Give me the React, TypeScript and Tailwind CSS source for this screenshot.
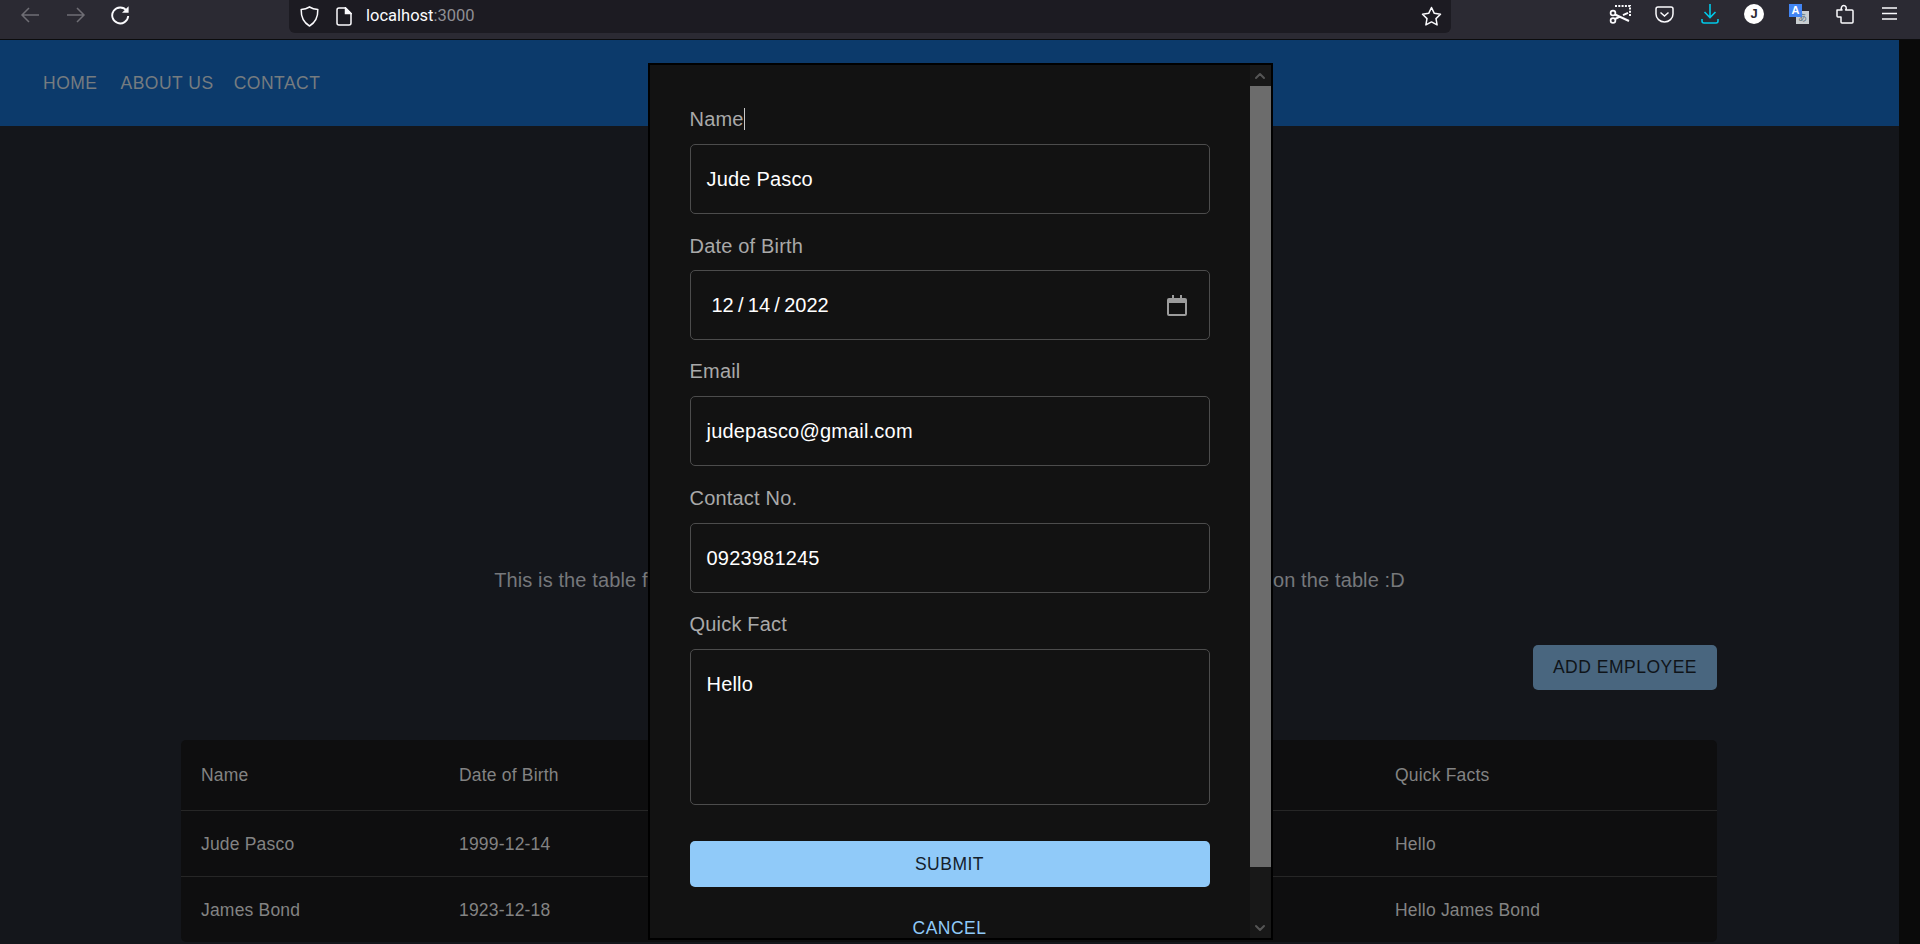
import { ChevronDown, ChevronUp } from "lucide-react";

const employees = [
  { name: "Jude Pasco", dob: "1999-12-14", email: "judepasco@gmail.com", contact: "0923981245", fact: "Hello" },
  { name: "James Bond", dob: "1923-12-18", email: "jamesbond@gmail.com", contact: "0912345678", fact: "Hello James Bond" },
];

function Toolbar() {
  return (
    <div className="flex h-[40px] shrink-0 border-b border-[#0c0c0d] bg-[#2b2a33]">
      <div className="flex h-[39px] w-[289px] shrink-0 items-start pl-[20px] pt-[5px]">
        <svg width="20" height="20" viewBox="0 0 20 20" fill="none" stroke="#6f6e75" strokeWidth="1.5">
          <path d="M19 10H2M9 3l-7 7 7 7" />
        </svg>
        <svg className="ml-[26px]" width="20" height="20" viewBox="0 0 20 20" fill="none" stroke="#6f6e75" strokeWidth="1.5">
          <path d="M1 10h17M11 3l7 7-7 7" />
        </svg>
        <svg className="ml-[24px]" width="20" height="20" viewBox="0 0 20 20" fill="none" stroke="#fbfbfe" strokeWidth="1.9">
          <path d="M16.5 5.5A8 8 0 1 0 18.2 11" />
          <path d="M18.6 1.2v6.6h-6.6z" fill="#fbfbfe" stroke="none" />
        </svg>
      </div>
      <div className="flex h-[33px] w-[1162px] shrink-0 items-center rounded-b-[6px] bg-[#1c1b22] pl-[11px]">
        <svg width="19" height="21" viewBox="0 0 19 21" fill="none" stroke="#fbfbfe" strokeWidth="1.5">
          <path d="M9.5 1C7 2.6 4 3.4 1.2 3.6c-.2 6.6 1.6 12.6 8.3 16.4 6.7-3.8 8.5-9.8 8.3-16.4C15 3.4 12 2.6 9.5 1z" />
        </svg>
        <svg className="ml-[17px]" width="16" height="19" viewBox="0 0 16 19" fill="none" stroke="#fbfbfe" strokeWidth="1.5">
          <path d="M3 1h6.5L15 6.5V16a2 2 0 0 1-2 2H3a2 2 0 0 1-2-2V3a2 2 0 0 1 2-2z" />
          <path d="M9.5 1v5.5H15z" fill="#fbfbfe" />
        </svg>
        <span className="ml-[14px] [font-family:'Roboto',sans-serif] text-[16.5px] text-[#fbfbfe]">
          localhost<span className="text-[#8f8f94]">:3000</span>
        </span>
        <svg className="ml-auto mr-[9px]" width="21" height="21" viewBox="0 0 21 21" fill="none" stroke="#fbfbfe" strokeWidth="1.5" strokeLinejoin="round">
          <path d="M10.5 1.5l2.8 5.8 6.2.9-4.5 4.4 1.1 6.3-5.6-3-5.6 3 1.1-6.3L1.5 8.2l6.2-.9z" />
        </svg>
      </div>
      <div className="flex h-[39px] flex-1 items-start pl-[158px] pt-[4px]">
        <svg width="22" height="20" viewBox="0 0 22 20" fill="none" stroke="#fbfbfe" strokeWidth="2">
          <path d="M6 2h15v11" strokeDasharray="2 1.3" />
          <circle cx="4" cy="9" r="2.4" strokeWidth="1.7" />
          <circle cx="4" cy="16.500" r="2.400" strokeWidth="1.700" />
          <path d="M6 10.500l14 6.500M6 15l5-2.300M14 11.200l5-2.400" />
        </svg>
        <svg className="ml-[24px] mt-[2px]" width="19" height="17" viewBox="0 0 19 17" fill="none" stroke="#fbfbfe" strokeWidth="1.5">
          <path d="M3 1h13a2 2 0 0 1 2 2v5a8.500 8 0 0 1-17 0V3a2 2 0 0 1 2-2z" />
          <path d="M5.500 6.500l4 3.500 4-3.500" />
        </svg>
        <svg className="ml-[27px]" width="18" height="20" viewBox="0 0 18 20" fill="none" stroke="#00c8e8" strokeWidth="1.6">
          <path d="M9 0v13M3.500 8L9 13.500 14.500 8" />
          <path d="M1 15v2a2 2 0 0 0 2 2h12a2 2 0 0 0 2-2v-2" />
        </svg>
        <div className="ml-[25px] flex h-[20px] w-[20px] items-center justify-center rounded-full bg-white [font-family:'Liberation_Sans',sans-serif] text-[13px] font-bold text-[#2b2a33]">
          J
        </div>
        <div className="relative ml-[25px] h-[20px] w-[20px]">
          <div className="absolute bottom-0 right-0 flex h-[13px] w-[13px] items-center justify-center bg-[#c9ced1] [font-family:'Noto_Sans_CJK_JP',sans-serif] text-[9px] leading-none text-[#59707d]">
            あ
          </div>
          <div className="absolute left-0 top-0 flex h-[13px] w-[13px] items-center justify-center bg-[#4285f4] [font-family:'Liberation_Sans',sans-serif] text-[11px] font-bold leading-none text-white">
            A
          </div>
        </div>
        <svg className="ml-[27px]" width="18" height="20" viewBox="0 0 18 20" fill="none" stroke="#fbfbfe" strokeWidth="1.5" strokeLinejoin="round">
          <path d="M1 6h5c-1-1.200-1-2.200-.4-3.200C6.500 1 9 1 10 2.800c.5 1 .4 2-.4 3.200H16a1 1 0 0 1 1 1v11a1 1 0 0 1-1 1H6a1 1 0 0 1-1-1v-5H2a1 1 0 0 1-1-1z" />
        </svg>
        <svg className="ml-[28px] mt-[3px]" width="15" height="13" viewBox="0 0 15 13" stroke="#fbfbfe" strokeWidth="1.500">
          <path d="M0 1h15M0 6.500h15M0 12h15" />
        </svg>
      </div>
    </div>
  );
}

function EmployeeTable() {
  return (
    <table className="ml-[181px] w-[1536px] table-fixed overflow-hidden rounded-[5px] bg-[#0e0e0f] text-left text-[17.5px] tracking-[0.19px] text-[#838383]">
      <colgroup>
        <col className="w-[258px]" />
        <col className="w-[258px]" />
        <col className="w-[339px]" />
        <col className="w-[339px]" />
        <col className="w-[342px]" />
      </colgroup>
      <thead>
        <tr className="h-[70px] border-b border-[#262626]">
          <th className="px-[20px] font-normal">Name</th>
          <th className="px-[20px] font-normal">Date of Birth</th>
          <th className="px-[20px] font-normal">Email</th>
          <th className="px-[20px] font-normal">Contact No.</th>
          <th className="px-[20px] font-normal">Quick Facts</th>
        </tr>
      </thead>
      <tbody>
        {employees.map((e) => (
          <tr key={e.name} className="h-[66px] border-b border-[#262626] last:border-b-0">
            <td className="px-[20px] pt-[2px]">{e.name}</td>
            <td className="px-[20px] pt-[2px]">{e.dob}</td>
            <td className="px-[20px] pt-[2px]">{e.email}</td>
            <td className="px-[20px] pt-[2px]">{e.contact}</td>
            <td className="px-[20px] pt-[2px]">{e.fact}</td>
          </tr>
        ))}
      </tbody>
    </table>
  );
}

function Field({ label, value, caret, className }: { label: string; value: string; caret?: boolean; className: string }) {
  return (
    <div className={className}>
      <div className="mb-[10px] flex h-[30px] items-center text-[20px] tracking-[0.19px] text-[#a9a9a9]">
        {label}
        {caret && <span className="h-[22px] w-px bg-[#c8c8c8]" />}
      </div>
      <div className="flex h-[70px] items-center rounded-[5px] border border-[#4c4c4c] px-[16px] text-[20px] tracking-[0.19px] text-white">
        {value}
      </div>
    </div>
  );
}

function EmployeeDialog() {
  return (
    <div className="fixed inset-x-0 bottom-[4px] top-[63px] flex justify-center">
      <div className="flex h-full w-[625px] overflow-hidden border-2 border-black bg-[#121212] [font-family:'Liberation_Sans',sans-serif]">
        <div className="min-w-0 flex-1 overflow-hidden px-[40px] pt-[39px]">
          <Field className="mb-[16.33px]" label="Name" value="Jude Pasco" caret />
          <div className="mb-[15.5px]">
            <div className="mb-[10px] flex h-[30px] items-center pt-[2px] text-[20px] tracking-[0.19px] text-[#a9a9a9]">Date of Birth</div>
            <div className="flex h-[70px] items-center justify-between rounded-[5px] border border-[#4c4c4c] pl-[21px] pr-[22px] text-[20px] text-white">
              <span className="[word-spacing:-1.3px]">12 / 14 / 2022</span>
              <svg width="20" height="21" viewBox="0 0 20 21" fill="none">
                <path d="M2 3h3V0h2v3h6V0h2v3h3a2 2 0 0 1 2 2v14a2 2 0 0 1-2 2H2a2 2 0 0 1-2-2V5a2 2 0 0 1 2-2zm0 5v11h16V8z" fill="#9c9c9c" />
              </svg>
            </div>
          </div>
          <Field className="mb-[17px]" label="Email" value="judepasco@gmail.com" />
          <Field className="mb-[16.33px]" label="Contact No." value="0923981245" />
          <div className="mb-[36px]">
            <div className="mb-[10px] flex h-[30px] items-center text-[20px] tracking-[0.19px] text-[#a9a9a9]">Quick Fact</div>
            <div className="h-[156px] rounded-[5px] border border-[#4c4c4c] px-[16px] pt-[19px] text-[20px] tracking-[0.19px] text-white">Hello</div>
          </div>
          <button className="h-[46px] w-full rounded-[5px] bg-[#90caf9] text-[17.5px] tracking-[0.5px] text-[#14202b]">SUBMIT</button>
          <button className="mt-[23px] h-[36px] w-full text-[17.5px] tracking-[0.5px] text-[#90caf9]">CANCEL</button>
        </div>
        <div className="flex w-[21px] shrink-0 flex-col bg-[#181818]">
          <div className="flex h-[21px] items-center justify-center">
            <ChevronUp size={16} strokeWidth={3} className="text-[#555555]" />
          </div>
          <div className="h-[781px] bg-[#6c6c6c]" />
          <div className="flex flex-1 items-end justify-center pb-[2px]">
            <ChevronDown size={16} strokeWidth={3} className="text-[#555555]" />
          </div>
        </div>
      </div>
    </div>
  );
}

export default function App() {
  return (
    <div className="flex h-[944px] w-[1920px] flex-col overflow-hidden bg-[#14161b] [font-family:'Liberation_Sans',sans-serif]">
      <Toolbar />
      <div className="flex min-h-0 flex-1">
        <div className="min-w-0 flex-1 overflow-hidden">
          <nav className="flex h-[86px] items-center gap-[23px] bg-[#0c3a6b] pl-[43px] text-[17.5px] tracking-[0.5px] text-[#767c80]">
            <a>HOME</a>
            <a>ABOUT US</a>
            <a className="-ml-[3px]">CONTACT</a>
          </nav>
          <p className="mt-[440px] text-center text-[20px] leading-[28px] tracking-[0.12px] text-[#76787b]">
            This is the table for the employees. You can add, edit, and delete any employee that is on the table :D
          </p>
          <div className="mr-[182px] mt-[51px] flex justify-end">
            <button className="h-[45px] w-[184px] rounded-[5px] bg-[#49667f] text-[17.5px] tracking-[0.5px] text-[#0f1419]">ADD EMPLOYEE</button>
          </div>
          <div className="mt-[50px]">
            <EmployeeTable />
          </div>
        </div>
        <div className="w-[21px] shrink-0 bg-[#0a0a0a]" />
      </div>
      <EmployeeDialog />
    </div>
  );
}
